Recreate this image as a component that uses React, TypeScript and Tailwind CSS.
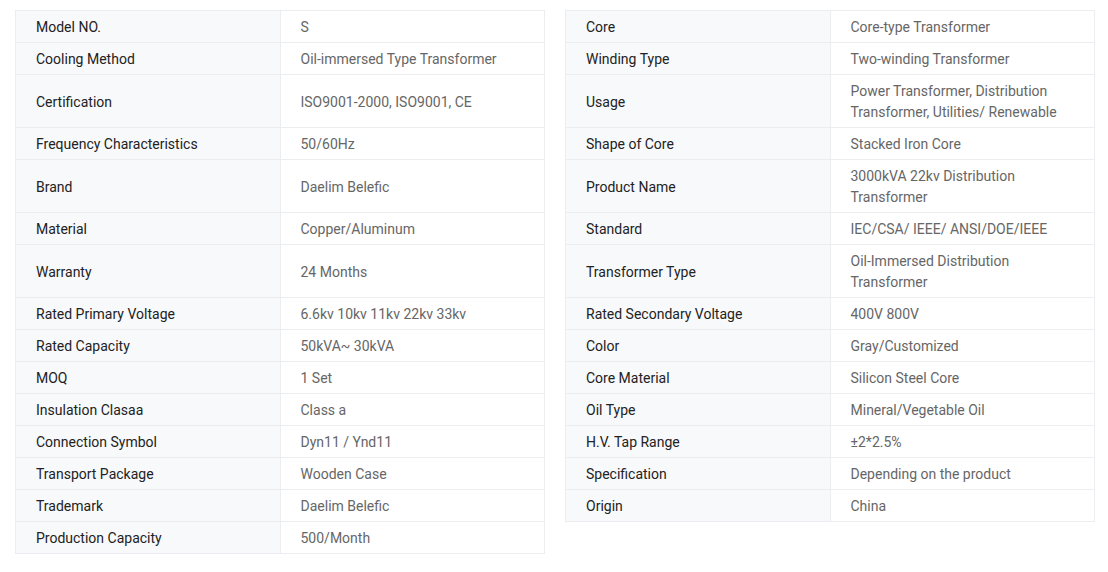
import React from "react";

type Row = [string, string];

const left: Row[] = [
  ["Model NO.", "S"],
  ["Cooling Method", "Oil-immersed Type Transformer"],
  ["Certification", "ISO9001-2000, ISO9001, CE"],
  ["Frequency Characteristics", "50/60Hz"],
  ["Brand", "Daelim Belefic"],
  ["Material", "Copper/Aluminum"],
  ["Warranty", "24 Months"],
  ["Rated Primary Voltage", "6.6kv 10kv 11kv 22kv 33kv"],
  ["Rated Capacity", "50kVA~ 30kVA"],
  ["MOQ", "1 Set"],
  ["Insulation Clasaa", "Class a"],
  ["Connection Symbol", "Dyn11 / Ynd11"],
  ["Transport Package", "Wooden Case"],
  ["Trademark", "Daelim Belefic"],
  ["Production Capacity", "500/Month"],
];

const right: Row[] = [
  ["Core", "Core-type Transformer"],
  ["Winding Type", "Two-winding Transformer"],
  ["Usage", "Power Transformer, Distribution Transformer, Utilities/ Renewable"],
  ["Shape of Core", "Stacked Iron Core"],
  ["Product Name", "3000kVA 22kv Distribution Transformer"],
  ["Standard", "IEC/CSA/ IEEE/ ANSI/DOE/IEEE"],
  ["Transformer Type", "Oil-Immersed Distribution Transformer"],
  ["Rated Secondary Voltage", "400V 800V"],
  ["Color", "Gray/Customized"],
  ["Core Material", "Silicon Steel Core"],
  ["Oil Type", "Mineral/Vegetable Oil"],
  ["H.V. Tap Range", "±2*2.5%"],
  ["Specification", "Depending on the product"],
  ["Origin", "China"],
];

// rows in which the partner column wraps to 2 lines get matched height
const tallLeft = new Set([2, 4, 6]);

function Table({ rows, tall }: { rows: Row[]; tall: Set<number> }) {
  return (
    <div className="w-[530px] border-t border-l border-[#ebedf0]">
      {rows.map(([k, v], i) => (
        <div
          key={i}
          className={`grid grid-cols-2 border-b border-[#ebedf0] ${tall.has(i) ? "min-h-[53px]" : "min-h-[32px]"}`}
        >
          <div className="bg-[#f8f9fb] border-r border-[#ebedf0] pl-[20px] pr-[10px] pt-[6px] pb-[4px] flex items-center text-[#222222]">
            {k}
          </div>
          <div className="border-r border-[#ebedf0] pl-[20px] pr-[14px] pt-[6px] pb-[4px] flex items-center text-[#666666]">
            {v}
          </div>
        </div>
      ))}
    </div>
  );
}

export default function App() {
  return (
    <div
      className="bg-white w-[1108px] h-[572px] pt-[10px] pl-[15px] flex items-start gap-[20px] text-[14px] leading-[21px]"
      style={{ fontFamily: "Roboto, 'Liberation Sans', Arial, sans-serif" }}
    >
      <Table rows={left} tall={tallLeft} />
      <Table rows={right} tall={new Set()} />
    </div>
  );
}
